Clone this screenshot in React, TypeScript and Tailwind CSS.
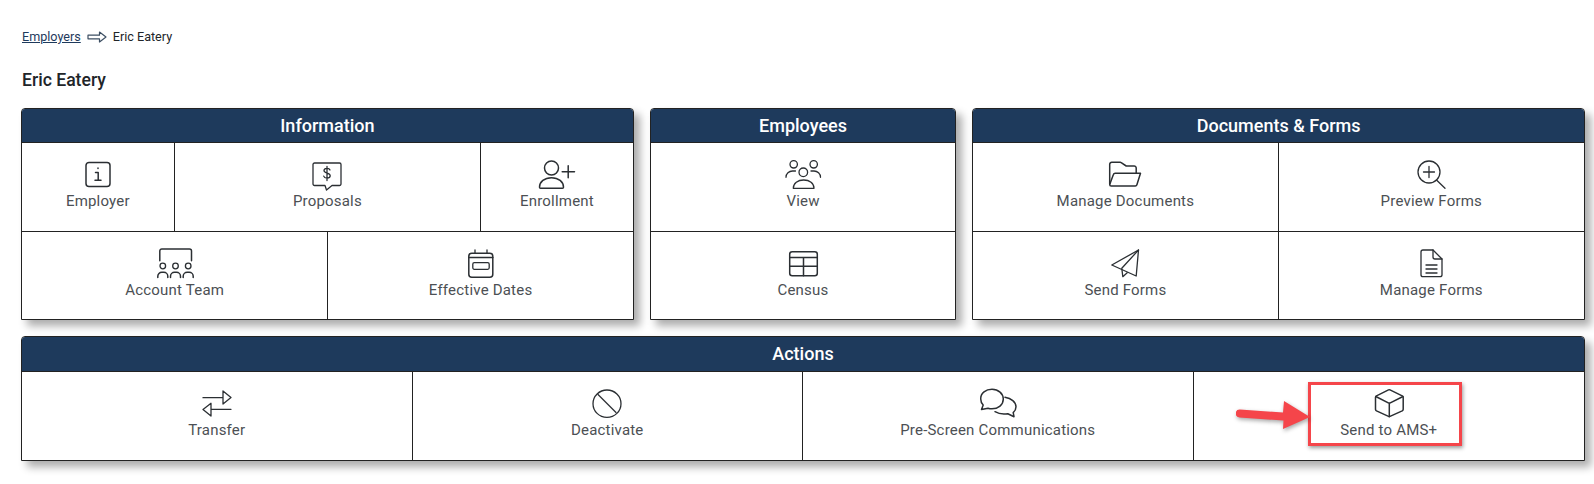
import type { ReactNode } from "react";

const Icon = ({ children }: { children: ReactNode }) => (
  <svg
    viewBox="0 0 32 32"
    className="h-8 w-8 shrink-0 overflow-visible"
    fill="none"
    stroke="#2b2f33"
    strokeWidth="1.3"
    strokeLinecap="round"
    strokeLinejoin="round"
  >
    {children}
  </svg>
);

const icons = {
  info: (
    <>
      <rect x="4" y="3.500" width="24" height="24" rx="3" strokeWidth="1.500" />
      <path d="M16 9v.6M13.500 13.500h2.700v7.500M13 21.300h6" strokeWidth="1.500" />
    </>
  ),
  proposal: (
    <>
      <path d="M3.500 4h25A1.500 1.500 0 0 1 30 5.500V25a1.500 1.500 0 0 1-1.500 1.500H21L15.500 31l-1.500-4.500H3.500A1.500 1.500 0 0 1 2 25V5.500A1.500 1.500 0 0 1 3.500 4z" />
      <path d="M19 11c-.4-1.200-1.500-1.700-3-1.700-1.800 0-3 .8-3 2.300s1.200 2 3 2.500 3.200 1.100 3.200 2.600-1.300 2.400-3.200 2.400-2.900-.7-3.300-2M16 7.500v14" />
    </>
  ),
  enroll: (
    <>
      <circle cx="10.500" cy="9" r="7" strokeWidth="1.500" />
      <path d="M-1.500 28.300c0-5.500 5-9.600 12-9.600s12 4.100 12 9.600a1 1 0 0 1-1 1h-22a1 1 0 0 1-1-1z" strokeWidth="1.500" />
      <path d="M21.200 12.700h12.300M27.200 6.700v12" strokeWidth="1.500" />
    </>
  ),
  team: (
    <>
      <path d="M.8 12.700V3a2 2 0 0 1 2-2h27.700a2 2 0 0 1 2 2v9.700" strokeWidth="1.500" />
      <circle cx="3.800" cy="18" r="2.800" />
      <circle cx="16.500" cy="18" r="2.800" />
      <circle cx="29.200" cy="18" r="2.800" />
      <path d="M-1.200 29.500v-1.200a4 4 0 0 1 4-4h2a4 4 0 0 1 4 4v1.200M11.500 29.500v-1.200a4 4 0 0 1 4-4h2a4 4 0 0 1 4 4v1.200M24.200 29.500v-1.200a4 4 0 0 1 4-4h2a4 4 0 0 1 4 4v1.200" strokeWidth="1.500" />
    </>
  ),
  dates: (
    <>
      <path d="M10 2v3.300M22 2v3.300" />
      <rect x="3.800" y="5.300" width="24" height="24" rx="3" strokeWidth="1.500" />
      <path d="M3.800 9.500h24" strokeWidth="1.500" />
      <rect x="7.800" y="14.700" width="16.400" height="6.600" rx="1.500" />
    </>
  ),
  people: (
    <>
      <circle cx="6.700" cy="5.300" r="3.700" />
      <circle cx="26.700" cy="5.300" r="3.700" />
      <circle cx="16.300" cy="13.300" r="4.300" />
      <path d="M-1 18.300c0-3.800 3-6.300 6.500-6.300h3M33.500 18.300c0-3.800-3-6.300-6.500-6.300h-3" />
      <path d="M6.300 29.300c0-5 4.500-8.300 10.400-8.300s10.300 3.300 10.300 8.300z" />
    </>
  ),
  census: (
    <>
      <rect x="2.700" y="3.700" width="27.600" height="24" rx="2.500" strokeWidth="1.500" />
      <path d="M2.700 9.500h27.600M2.700 18.300h27.600M16.500 9.500v18.200" strokeWidth="1.500" />
    </>
  ),
  folder: (
    <>
      <path d="M.7 25V5.300a2 2 0 0 1 2-2h8.500a1.500 1.500 0 0 1 1 .4L17.200 7H25a2 2 0 0 1 2.200 2v5.300" strokeWidth="1.500" />
      <path d="M.7 25.500 4.300 15.700a2 2 0 0 1 1.900-1.400h25.300l-3.600 11.500a1.700 1.700 0 0 1-1.600 1.200H2.200A1.500 1.500 0 0 1 .7 25.500z" strokeWidth="1.500" />
    </>
  ),
  zoomPlus: (
    <>
      <circle cx="14" cy="13" r="11" />
      <path d="M14 7.500v11M8.500 13h11M21.500 21l8.500 8.300" />
    </>
  ),
  plane: (
    <>
      <path d="M29.500 2 2.800 17l24.400 11z" />
      <path d="M29.500 2 12.800 20.300l1 8.400 4.400-4" />
    </>
  ),
  doc: (
    <>
      <path d="M18 2H8a2 2 0 0 0-2 2v22.700a2 2 0 0 0 2 2h17a2 2 0 0 0 2-2V11z" />
      <path d="M18 2v7a2 2 0 0 0 2 2h7M11 17h11M11 21h11M11 25h11" />
    </>
  ),
  transfer: (
    <>
      <path d="M2 9.700h20M22 3v13l8-6.500z" />
      <path d="M30 21.300H10M10 15.300V28l-8-6.500z" />
    </>
  ),
  ban: (
    <>
      <ellipse cx="16" cy="15.700" rx="14" ry="13.700" />
      <path d="m7 6.500 18 18" />
    </>
  ),
  chat: (
    <>
      <path d="M10 1.300C3.800 1.300-1.300 5-1.300 10.800c0 2.700 1 4.800 2.500 6.200L-.5 21.500l6.500-1.300c1.200.4 2.600.6 4 .6 6.300 0 11.300-4 11.300-9.700S16.300 1.300 10 1.300z" strokeWidth="1.500" />
      <path d="M23 9.300c6.200 1 11 4.500 11 9.500 0 2.500-1.200 4.400-2.800 5.800l.8 4.100-6.200-3c-5 .8-10-.3-12.800-2" strokeWidth="1.500" />
    </>
  ),
  box: (
    <>
      <path d="m15.500 1.900-12 6a2 2 0 0 0-1 1.500v12a2 2 0 0 0 1 1.500l12 5.500a2 2 0 0 0 1.500 0l12.200-5.500a2 2 0 0 0 1-1.500v-12a2 2 0 0 0-1-1.500l-12.200-6a2 2 0 0 0-1.500 0z" strokeWidth="1.500" />
      <path d="M2.800 8.500 16.300 15.300 30 8.500M16.300 15.300v13.400" strokeWidth="1.500" />
    </>
  ),
};

type Item = { label: string; icon: ReactNode; span?: string };

const Cell = ({ label, icon, span = "" }: Item) => (
  <div className={`flex flex-col items-center border-t border-[#222] pt-4 ${span}`}>
    <Icon>{icon}</Icon>
    <span className="text-[15px] leading-5 tracking-[0.2px] text-[#4c5054]">{label}</span>
  </div>
);

const Card = ({ title, head, cols, children }: { title: string; head: string; cols: string; children: ReactNode }) => (
  <section className="overflow-hidden rounded-t-[4px] border border-[#222] bg-white shadow-[6px_6px_8px_rgba(0,0,0,0.33)]">
    <h2 className={`bg-[#1e3a5c] text-center text-[18px] leading-[34px] font-medium text-white ${head}`}>{title}</h2>
    <div className={`grid ${cols}`}>{children}</div>
  </section>
);

export default function App() {
  return (
    <div className="min-h-[484px] bg-white pt-[29px] pr-[9px] pl-[21px] font-['Roboto',sans-serif] text-[#212529]">
      <nav className="flex h-4 items-center pl-px text-[12.6px] leading-4">
        <a className="text-[#1e3a5c] underline">Employers</a>
        <svg viewBox="0 0 20 12" className="mx-[6px] h-3 w-5" fill="none" stroke="#3d4f63" strokeWidth="1.200" strokeLinejoin="round">
          <path d="M1 4.200h11.500V1L19 6l-6.500 5V7.800H1z" />
        </svg>
        <span>Eric Eatery</span>
      </nav>
      <h1 className="mt-[23px] pl-px text-[17.600px] leading-6 font-medium">Eric Eatery</h1>
      <div className="mt-4 grid grid-cols-[2fr_1fr_2fr] gap-4">
        <Card title="Information" head="h-[33px]" cols="grid-cols-4 grid-rows-[89px_88px]">
          <Cell label="Employer" icon={icons.info} span="col-span-1 border-r" />
          <Cell label="Proposals" icon={icons.proposal} span="col-span-2" />
          <Cell label="Enrollment" icon={icons.enroll} span="col-span-1 border-l" />
          <Cell label="Account Team" icon={icons.team} span="col-span-2" />
          <Cell label="Effective Dates" icon={icons.dates} span="col-span-2 border-l" />
        </Card>
        <Card title="Employees" head="h-[33px]" cols="grid-cols-1 grid-rows-[89px_88px]">
          <Cell label="View" icon={icons.people} />
          <Cell label="Census" icon={icons.census} />
        </Card>
        <Card title="Documents & Forms" head="h-[33px]" cols="grid-cols-2 grid-rows-[89px_88px]">
          <Cell label="Manage Documents" icon={icons.folder} span="border-r" />
          <Cell label="Preview Forms" icon={icons.zoomPlus} />
          <Cell label="Send Forms" icon={icons.plane} span="border-r" />
          <Cell label="Manage Forms" icon={icons.doc} />
        </Card>
      </div>
      <div className="relative mt-4">
        <Card title="Actions" head="h-[34px]" cols="grid-cols-4 grid-rows-[89px]">
          <Cell label="Transfer" icon={icons.transfer} span="border-r" />
          <Cell label="Deactivate" icon={icons.ban} span="border-r" />
          <Cell label="Pre-Screen Communications" icon={icons.chat} span="border-r" />
          <Cell label="Send to AMS+" icon={icons.box} />
        </Card>
        <div className="absolute top-[46px] left-[1287px] h-[64px] w-[154px] border-[3px] border-[#f5454a] shadow-[1px_2px_4px_rgba(0,0,0,0.4)]" />
        <svg viewBox="0 0 76 32" className="absolute top-[63px] left-[1215px] h-8 w-[76px] drop-shadow-[1px_2px_2px_rgba(0,0,0,0.35)]">
          <path d="M4 10.500 47 13.500 48 2 74 18 47 30 47.500 21.500 3.500 18.500a4 4 0 0 1 .5-8z" fill="#f5454a" />
        </svg>
      </div>
    </div>
  );
}
